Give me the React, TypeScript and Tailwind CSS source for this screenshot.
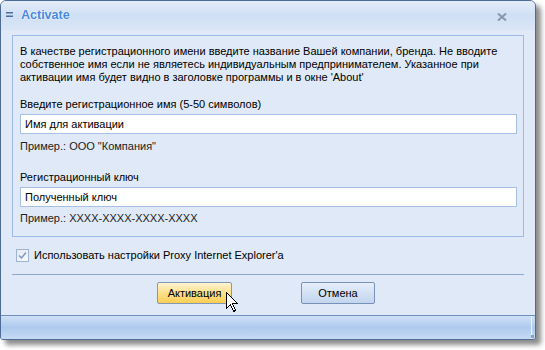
import React from "react";

const font = { fontFamily: '"Liberation Sans", Arial, sans-serif' };

function Field({ value }: { value: string }) {
  return (
    <div className="flex h-[20px] items-center border border-[#a7c0e4] bg-white pl-[4px] text-[11px] text-black">
      {value}
    </div>
  );
}

function Cursor() {
  return (
    <svg
      className="absolute left-[226px] top-[292px]"
      width="13"
      height="22"
      viewBox="0 0 13 22"
    >
      <path
        d="M0.5 0.5 L0.5 16.5 L4.5 12.5 L7.5 19.5 L9.5 18.5 L6.5 11.5 L11.5 11.5 Z"
        fill="#ffffff"
        stroke="#000000"
        strokeWidth="1"
        shapeRendering="crispEdges"
      />
    </svg>
  );
}

export default function App() {
  return (
    <div className="relative h-[350px] w-[545px] bg-white" style={font}>
      <div className="flex h-[340px] w-[536px] flex-col overflow-hidden rounded-t-[6px] rounded-b-[3px] border border-[#4d6b94] bg-[#dfe9f7] shadow-[5px_5px_5px_rgba(0,0,0,0.45)]">
        {/* title bar */}
        <div className="flex h-[29px] shrink-0 items-center bg-gradient-to-b from-[#e4edf9] via-[#cfdff4] to-[#dae6f6] pl-[5px] pr-[28px]">
          <svg width="7" height="6" viewBox="0 0 7 6" className="mt-[-1px]">
            <rect x="0" y="0" width="7" height="1.5" fill="#4f6d96" />
            <rect x="0" y="3.5" width="7" height="1.5" fill="#4f6d96" />
          </svg>
          <span className="ml-[8px] text-[12.5px] font-bold text-[#4589e2] [text-shadow:0_0_2px_#ffffff,0_0_1px_#ffffff]">
            Activate
          </span>
          <svg width="10" height="8" viewBox="0 0 10 8" className="ml-auto mt-[2px]">
            <path d="M1 0.5 L9 7.5 M9 0.5 L1 7.5" stroke="#8797ad" strokeWidth="2" />
          </svg>
        </div>

        {/* body */}
        <div className="flex flex-1 flex-col px-[11px] pt-[5px] text-[11px] leading-[13px] text-black">
          <div className="border border-[#9bbbe6] pb-[11px] pl-[7px] pr-[6px] pt-[9px]">
            <p>
              В качестве регистрационного имени введите название Вашей компании, бренда. Не вводите
              собственное имя если не являетесь индивидуальным предпринимателем. Указанное при
              активации имя будет видно в заголовке программы и в окне 'About'
            </p>
            <div className="mt-[14px]">Введите регистрационное имя (5-50 символов)</div>
            <div className="mt-[3px]">
              <Field value="Имя для активации" />
            </div>
            <div className="mt-[6px] text-[#222]">Пример.: ООО "Компания"</div>
            <div className="mt-[18px]">Регистрационный ключ</div>
            <div className="mt-[3px]">
              <Field value="Полученный ключ" />
            </div>
            <div className="mt-[5px] text-[#222]">Пример.: XXXX-XXXX-XXXX-XXXX</div>
          </div>

          <div className="ml-[4px] mt-[12px] flex items-center gap-[5px]">
            <div className="flex h-[13px] w-[13px] items-center justify-center border border-[#9fb3cf] bg-gradient-to-br from-[#e3e9f1] to-[#f8fafc]">
              <svg width="9" height="9" viewBox="0 0 9 9">
                <path d="M1 4.5 L3.5 7 L8 1.5" fill="none" stroke="#7b98c2" strokeWidth="1.5" />
              </svg>
            </div>
            <span className="leading-[13px]">Использовать настройки Proxy Internet Explorer'a</span>
          </div>

          <div className="mt-[12px] h-px bg-[#8ea8cc]" />

          <div className="mt-[7px] flex justify-center gap-[69px] pr-[4px]">
            <div className="flex h-[22px] w-[75px] items-center justify-center rounded-[2px] border border-[#8397b6] bg-gradient-to-b from-[#fff3cf] via-[#ffe08a] to-[#fbcf52]">
              Активация
            </div>
            <div className="flex h-[22px] w-[74px] items-center justify-center rounded-[2px] border border-[#7892b7] bg-gradient-to-b from-[#e6eefa] via-[#d3e1f4] to-[#c3d6ef]">
              Отмена
            </div>
          </div>
        </div>

        {/* status bar */}
        <div className="relative h-[24px] shrink-0 border-t border-[#6f8fbd] bg-gradient-to-b from-[#cfe0f6] via-[#aecaee] to-[#c6daf4]">
          <div className="absolute right-[3px] top-0 h-full w-px bg-[#edf3fb]" />
          <div className="absolute bottom-[1px] right-[1px] h-[3px] w-[3px] bg-[#8aa2c4]" />
        </div>
      </div>
      <Cursor />
    </div>
  );
}
